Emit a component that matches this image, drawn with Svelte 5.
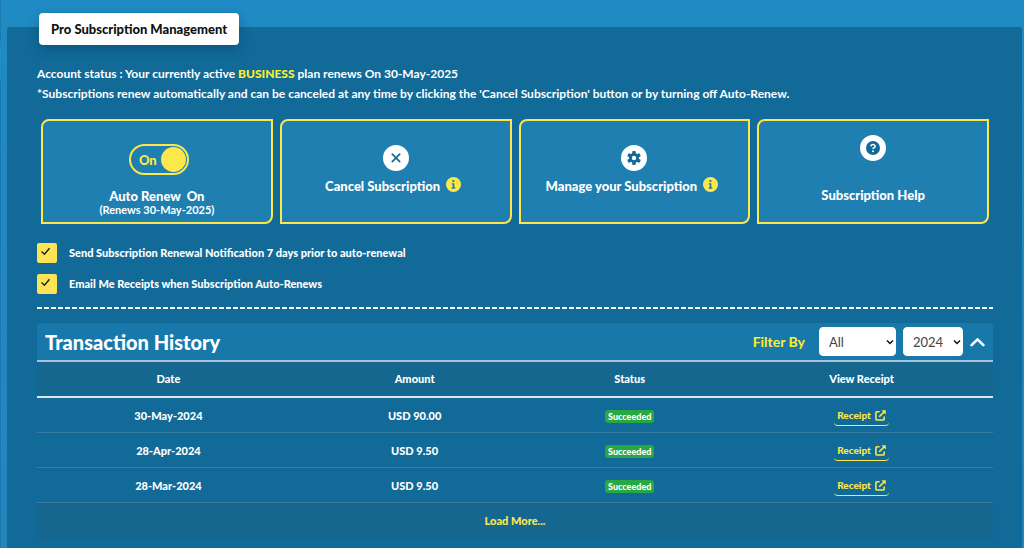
<script>
  const rows = [
    { date: '30-May-2024', amount: 'USD 90.00' },
    { date: '28-Apr-2024', amount: 'USD 9.50' },
    { date: '28-Mar-2024', amount: 'USD 9.50' }
  ];
  let autoRenew = $state(true);
  let notify = $state(true);
  let receipts = $state(true);
  let open = $state(true);
</script>

{#snippet info()}
  <svg class="info" viewBox="0 0 16 16" aria-hidden="true">
    <circle cx="8" cy="8" r="8" fill="#fde74c" />
    <path d="M6.9 3.3h2v1.9h-2zM6.1 6.6h2.8v4.300h1v1.500H6.100v-1.500h1V8.100h-1z" fill="#2a7896" />
  </svg>
{/snippet}

<div class="page">
  <main class="panel">
    <h1>Pro Subscription Management</h1>

    <div class="status">
      <p>Account status : Your currently active <strong>BUSINESS</strong> plan renews On 30-May-2025</p>
      <p>*Subscriptions renew automatically and can be canceled at any time by clicking the 'Cancel Subscription' button or by turning off Auto-Renew.</p>
    </div>

    <div class="cards">
      <div class="card renew">
        <label class="toggle">
          <input type="checkbox" bind:checked={autoRenew} aria-label="Auto Renew" />
          <span>On</span>
          <i></i>
        </label>
        <b>Auto Renew&nbsp; On</b>
        <small>(Renews 30-May-2025)</small>
      </div>
      <button class="card" type="button">
        <svg class="round" viewBox="0 0 26 26" aria-hidden="true">
          <circle cx="13" cy="13" r="13" fill="#fff" />
          <path d="M9.3 9.2l7.4 7.4M16.7 9.2l-7.4 7.4" stroke="#126a98" stroke-width="1.7" stroke-linecap="round" />
        </svg>
        <span class="caption tip">Cancel Subscription {@render info()}</span>
      </button>
      <button class="card" type="button">
        <svg class="round" viewBox="0 0 26 26" aria-hidden="true">
          <circle cx="13" cy="13" r="13" fill="#fff" />
          <g fill="#126a98">
            <circle cx="13" cy="13" r="5" />
            <rect x="11.2" y="6" width="3.6" height="14" rx="1" />
            <rect x="11.2" y="6" width="3.6" height="14" rx="1" transform="rotate(60 13 13)" />
            <rect x="11.2" y="6" width="3.6" height="14" rx="1" transform="rotate(120 13 13)" />
          </g>
          <circle cx="13" cy="13" r="2.2" fill="#fff" />
        </svg>
        <span class="caption tip">Manage your Subscription {@render info()}</span>
      </button>
      <button class="card help" type="button">
        <svg class="round" viewBox="0 0 26 26" aria-hidden="true">
          <circle cx="13" cy="13" r="13" fill="#fff" />
          <circle cx="13" cy="13" r="7" fill="#126a98" />
          <path d="M10.9 11.4c.2-2.5 4.3-2.4 4.2 0 0 1.3-2 1.3-2 2.5" fill="none" stroke="#fff" stroke-width="1.5" />
          <circle cx="13" cy="16.2" r="1" fill="#fff" />
        </svg>
        <span class="caption">Subscription Help</span>
      </button>
    </div>

    <div class="options">
      <label><input type="checkbox" bind:checked={notify} /><span>Send Subscription Renewal Notification 7 days prior to auto-renewal</span></label>
      <label><input type="checkbox" bind:checked={receipts} /><span>Email Me Receipts when Subscription Auto-Renews</span></label>
    </div>

    <div class="divider"></div>

    <section>
      <header>
        <h2>Transaction History</h2>
        <label for="kind">Filter By</label>
        <select id="kind"><option>All</option></select>
        <select id="year" aria-label="Year"><option>2024</option></select>
        <button class="collapse" type="button" aria-label="Collapse" onclick={() => (open = !open)}>
          <svg viewBox="0 0 14 9" aria-hidden="true"><path d="M1.5 7.5L7 2l5.5 5.5" fill="none" stroke="#fff" stroke-width="2.4" stroke-linecap="round" stroke-linejoin="round" /></svg>
        </button>
      </header>
      {#if open}
        <table>
          <thead>
            <tr><th>Date</th><th>Amount</th><th>Status</th><th>View Receipt</th></tr>
          </thead>
          <tbody>
            {#each rows as row}
              <tr>
                <td>{row.date}</td>
                <td>{row.amount}</td>
                <td><span class="badge">Succeeded</span></td>
                <td>
                  <a href="#receipt">Receipt
                    <svg viewBox="0 0 12 12" aria-hidden="true">
                      <path d="M5 2H2.2Q1 2 1 3.2v6.6Q1 11 2.2 11h6.6Q10 11 10 9.800V7.200M4.600 7.400L10 2" fill="none" stroke="#fde74c" stroke-width="1.700" />
                      <path d="M7 .3h4.700V5z" fill="#fde74c" />
                    </svg>
                  </a>
                </td>
              </tr>
            {/each}
          </tbody>
        </table>
        <button class="more" type="button">Load More...</button>
      {/if}
    </section>
  </main>
</div>

<style>
  :global(body) {
    margin: 0;
    background: #208cc6;
  }
  .page {
    box-sizing: border-box;
    min-height: 100vh;
    padding: 27px 2px 0 7px;
    display: flex;
    font: 900 11px/20px Lato, sans-serif;
    color: #fff;
    background:
      linear-gradient(#1b79ae 0 41px, #208cc6 41px 81px, #1b79ae 81px) 0 0 / 1px 100% no-repeat,
      linear-gradient(#208cc6, #208ac2 27px, #2485bd);
  }
  .panel {
    flex: 1;
    min-width: 0;
    padding: 0 29px 9px 30px;
    border-radius: 3px 3px 0 0;
    background: #116a98;
  }
  h1 {
    width: fit-content;
    margin: -14px 0 0 2px;
    padding: 0 12px;
    border-radius: 4px;
    background: #fff;
    box-shadow: 0 4px 12px rgb(0 40 80 / 30%);
    color: #111;
    font-size: 13px;
    font-weight: 900;
    line-height: 32px;
  }
  .status {
    margin-top: 19px;
    font-size: 12px;
    font-weight: 700;
  }
  p {
    margin: 0;
  }
  strong {
    color: #fdee30;
    font-weight: 900;
  }
  .cards {
    display: grid;
    grid-template-columns: repeat(4, 1fr);
    gap: 7px;
    margin: 15px 4px 0;
  }
  .card {
    box-sizing: border-box;
    min-height: 105px;
    padding: 24px 4px 0;
    display: flex;
    flex-direction: column;
    align-items: center;
    border: 2px solid #fde74c;
    border-radius: 8px 0;
    background: #1f7fb0;
    color: #fff;
    font: inherit;
    font-size: 13px;
  }
  .card b {
    margin-top: 14px;
    font-weight: 900;
    line-height: 14px;
  }
  .card small {
    font-size: 11px;
    font-weight: 700;
    line-height: 13px;
  }
  .renew {
    padding-top: 23px;
  }
  .help {
    padding-top: 14px;
  }
  .help .caption {
    margin-top: 24px;
  }
  .toggle {
    box-sizing: border-box;
    width: 60px;
    height: 31px;
    margin-left: 4px;
    padding: 0 1px 0 8px;
    display: flex;
    align-items: center;
    justify-content: space-between;
    border: 2px solid #fde74c;
    border-radius: 16px;
    color: #fde74c;
  }
  .toggle input {
    position: absolute;
    opacity: 0;
  }
  .toggle i {
    width: 25px;
    height: 25px;
    border-radius: 50%;
    background: #fde74c;
  }
  .round {
    width: 26px;
    height: 26px;
    flex: none;
  }
  .caption {
    display: flex;
    align-items: center;
    gap: 6px;
    margin-top: 5px;
    line-height: 20px;
  }
  .tip {
    padding-right: 5px;
  }
  .info {
    width: 15px;
    height: 15px;
    margin-bottom: 4px;
  }
  .options {
    display: grid;
    gap: 11px;
    margin-top: 19px;
  }
  .options label {
    display: flex;
    gap: 12px;
  }
  .options input {
    appearance: none;
    width: 20px;
    height: 20px;
    margin: 0;
    border-radius: 2px;
    background: #fde456;
  }
  .options input:checked {
    background: #fde456 url("data:image/svg+xml,%3Csvg xmlns='http://www.w3.org/2000/svg' viewBox='0 0 20 20'%3E%3Cpath d='M4.500 8.500l3 2.700 5-6' fill='none' stroke='%23221f10' stroke-width='1.400'/%3E%3C/svg%3E");
  }
  .divider {
    height: 2px;
    margin-top: 13px;
    background: repeating-linear-gradient(90deg, #fff 0 5px, transparent 5px 7px);
  }
  section {
    margin-top: 14px;
  }
  header {
    height: 37px;
    padding: 0 8px;
    display: flex;
    align-items: center;
    border-bottom: 2px solid #a9c3dc;
    border-radius: 3px 3px 0 0;
    background: #1878aa;
  }
  h2 {
    flex: 1;
    margin: 0;
    font-size: 20px;
    font-weight: 900;
    line-height: 24px;
  }
  header label {
    margin-right: 14px;
    color: #fdee30;
    font-size: 14px;
    font-weight: 700;
  }
  select {
    appearance: none;
    height: 29px;
    margin-right: 7px;
    padding: 0 0 0 9px;
    border: 1px solid #fff;
    border-radius: 4px;
    background: #fff url("data:image/svg+xml,%3Csvg xmlns='http://www.w3.org/2000/svg' viewBox='0 0 8 6'%3E%3Cpath d='M1 1.500l3 3 3-3' fill='none' stroke='%23111' stroke-width='1.500'/%3E%3C/svg%3E") right 1px center / 8px 6px no-repeat;
    color: #444;
    font: 400 13px Lato, sans-serif;
  }
  #kind {
    width: 77px;
  }
  #year {
    width: 60px;
  }
  .collapse {
    padding: 0;
    border: 0;
    background: none;
  }
  .collapse svg {
    display: block;
    width: 15px;
    height: 10px;
  }
  table {
    width: 100%;
    border-collapse: collapse;
    table-layout: fixed;
    text-align: center;
  }
  th,
  td {
    height: 34px;
    padding: 0;
  }
  th {
    background: #166790;
    border-bottom: 2px solid #dce6ef;
    font-weight: 900;
  }
  th:nth-child(1) {
    width: 27.5%;
  }
  th:nth-child(2) {
    width: 24%;
  }
  th:nth-child(3) {
    width: 21%;
  }
  td {
    height: 33px;
    padding-top: 1px;
    border-bottom: 1px solid #3a7ba2;
  }
  .badge {
    display: inline-block;
    padding: 0 3px;
    border-radius: 3px;
    background: #28a745;
    font-size: 9px;
    line-height: 13px;
    vertical-align: middle;
  }
  a {
    display: inline-flex;
    align-items: center;
    gap: 4px;
    padding: 0 3px;
    border-bottom: 1px solid #fde74c;
    border-radius: 4px;
    color: #fde74c;
    font-size: 10px;
    text-decoration: none;
    vertical-align: middle;
  }
  a svg {
    width: 11px;
    height: 11px;
  }
  .more {
    width: 100%;
    height: 36px;
    padding: 0;
    display: block;
    border: 0;
    background: #166790;
    color: #fde74c;
    font: inherit;
  }
</style>
